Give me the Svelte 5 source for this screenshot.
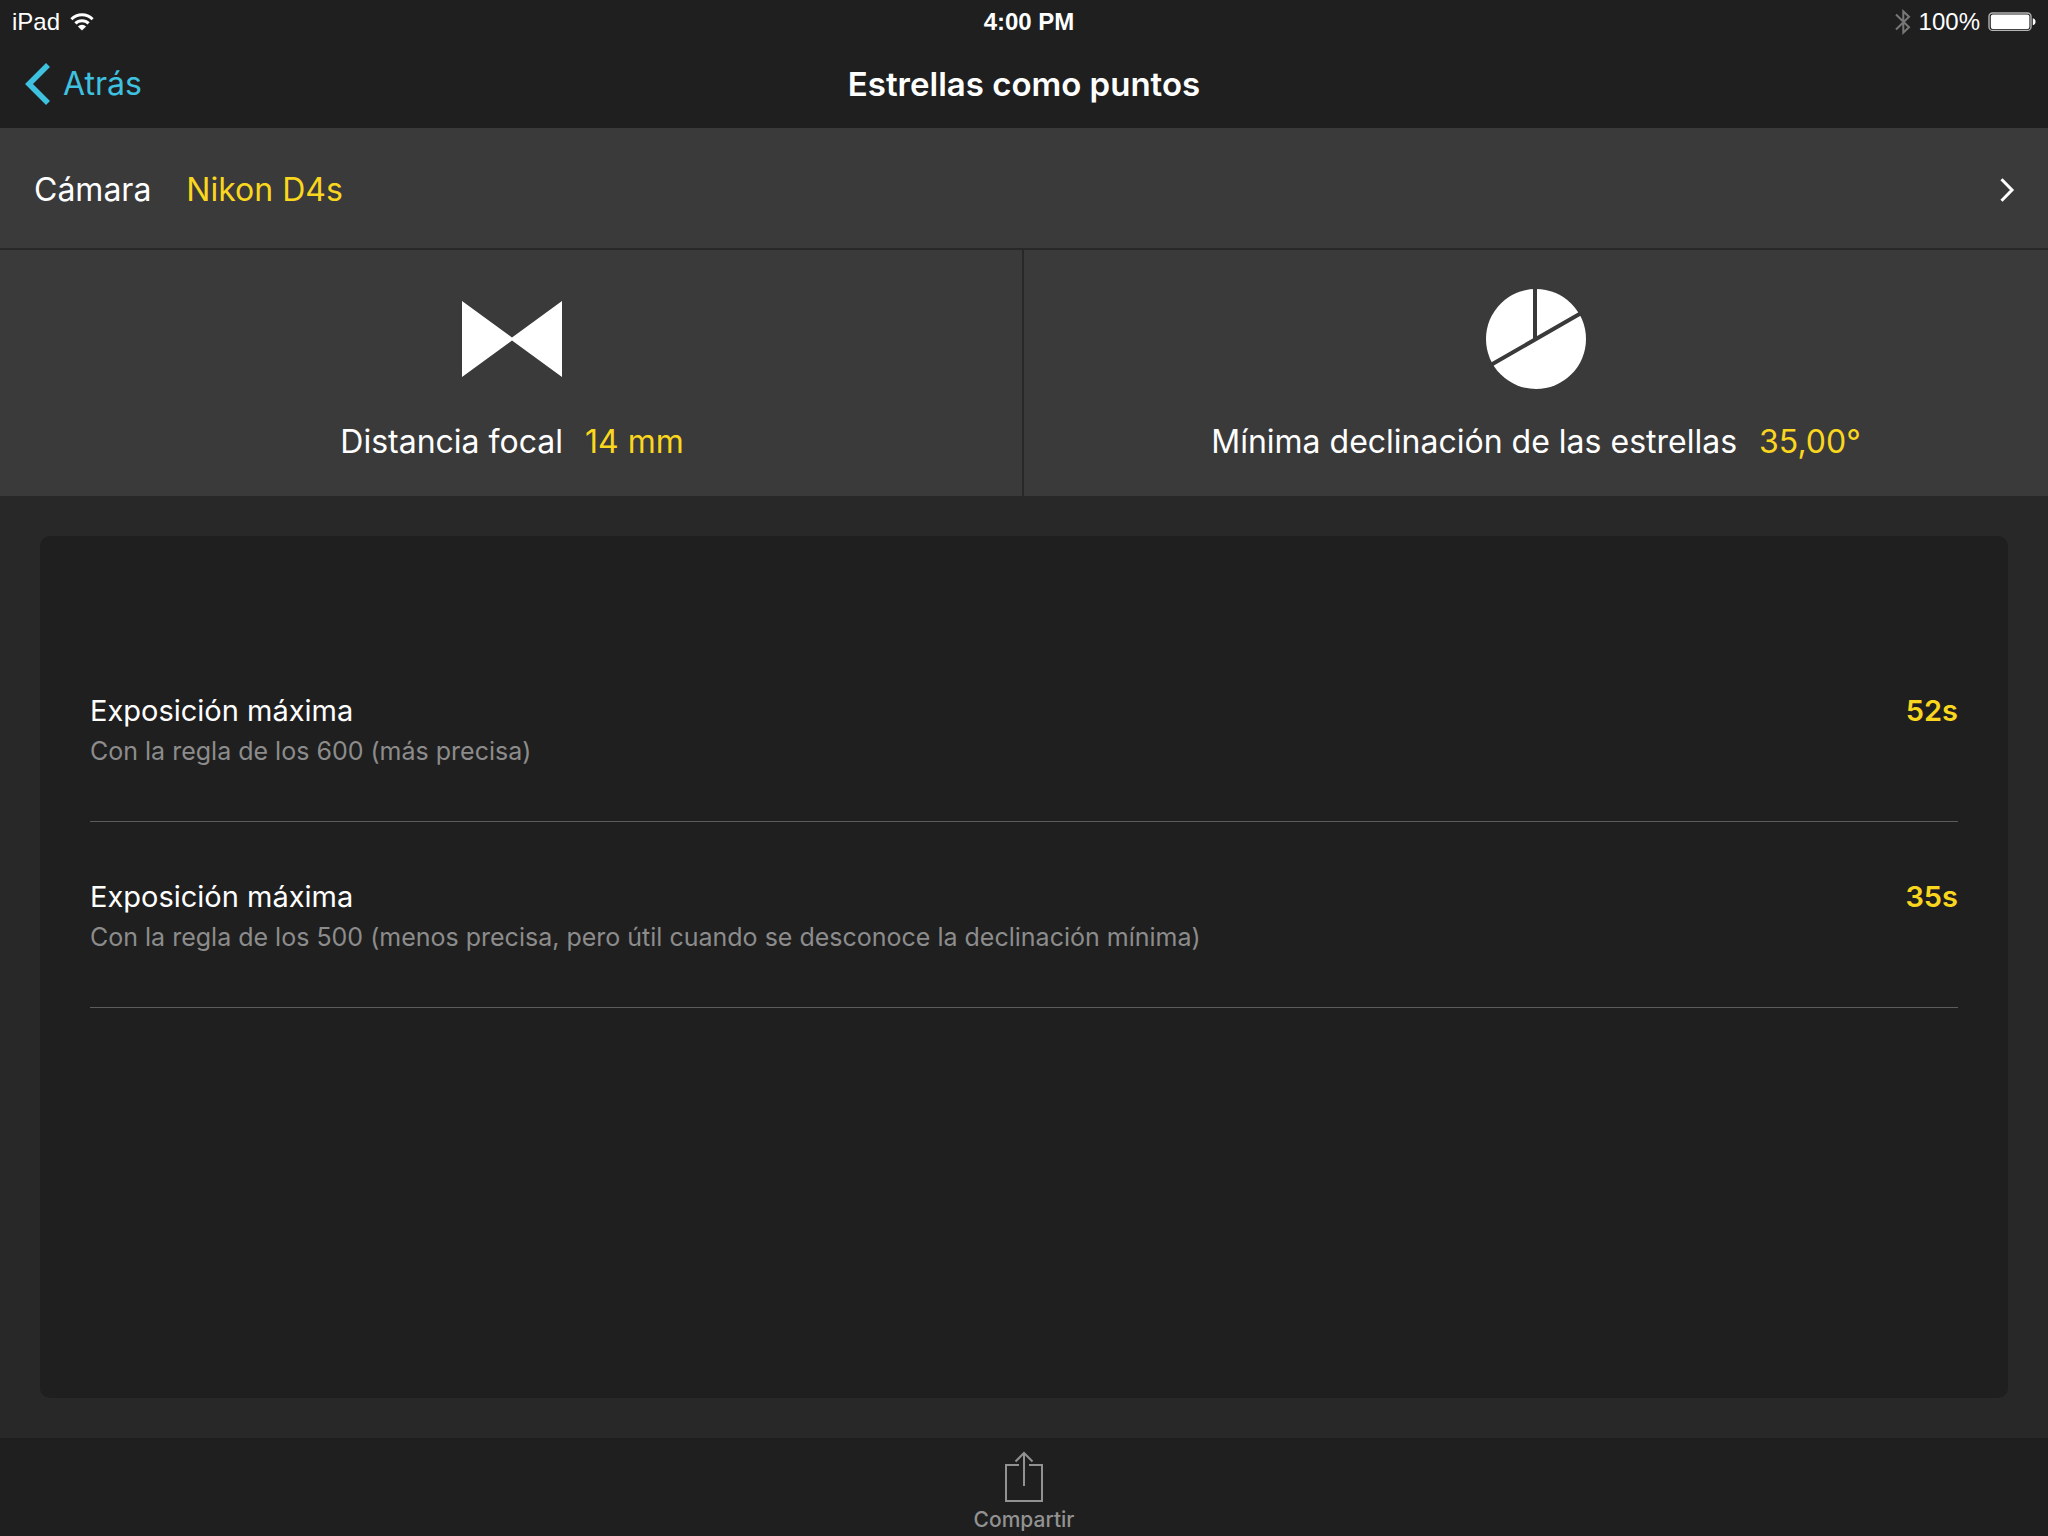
<script>
  const results = [
    { title: 'Exposición máxima', note: 'Con la regla de los 600 (más precisa)', value: '52s' },
    {
      title: 'Exposición máxima',
      note: 'Con la regla de los 500 (menos precisa, pero útil cuando se desconoce la declinación mínima)',
      value: '35s'
    }
  ];
</script>

<div class="screen">
  <div class="status">
    <div class="status-side">
      <span>iPad</span>
      <svg class="wifi" width="24" height="18" viewBox="0 0 24 18" aria-hidden="true">
        <g fill="none" stroke="#fff" stroke-width="3">
          <path d="M1.4 6.2a15 15 0 0 1 21.2 0" />
          <path d="M5.4 10.4a9.3 9.3 0 0 1 13.2 0" />
        </g>
        <path d="M7.9 13.4a5.8 5.8 0 0 1 8.2 0L12 17.6z" fill="#fff" />
      </svg>
    </div>
    <strong class="time">4:00 PM</strong>
    <div class="status-side end">
      <svg width="16" height="26" viewBox="0 0 16 26" fill="none" stroke="#777" stroke-width="2" aria-hidden="true">
        <path d="M1 5.5 14 18.3 8.3 23.6V2.4L14 7.7 1 20.5" />
      </svg>
      <span>100%</span>
      <svg width="48" height="20" viewBox="0 0 48 20" aria-hidden="true">
        <rect x="1" y="1" width="42" height="17.4" rx="3.5" fill="none" stroke="#b4b4b4" stroke-width="1.4" />
        <rect x="2.8" y="2.6" width="38.6" height="14.4" rx="2" fill="#fff" />
        <path d="M44.8 6.2a3.6 3.6 0 0 1 0 7z" fill="#fff" />
      </svg>
    </div>
  </div>

  <header class="nav">
    <button class="back">
      <svg width="27" height="42" viewBox="0 0 27 42" fill="none" stroke="#3fc1e0" stroke-width="5.6" aria-hidden="true">
        <path d="M24 2 5 21l19 19" />
      </svg>
      <span>Atrás</span>
    </button>
    <h1>Estrellas como puntos</h1>
  </header>

  <button class="camera">
    <span>Cámara</span>
    <span class="accent">Nikon D4s</span>
    <svg class="chevron" width="16" height="24" viewBox="0 0 16 24" fill="none" stroke="#fff" stroke-width="3" aria-hidden="true">
      <path d="M1.5 1.2 12 12 1.5 22.8" />
    </svg>
  </button>

  <div class="tiles">
    <button class="tile">
      <svg width="100" height="100" viewBox="0 0 100 100" fill="#fff" aria-hidden="true">
        <path d="M0 12 50 48.5 100 12V88L50 51.5 0 88z" />
      </svg>
      <span class="pair"><span>Distancia focal</span><span class="accent">14 mm</span></span>
    </button>
    <button class="tile">
      <svg width="100" height="100" viewBox="0 0 100 100" aria-hidden="true">
        <circle cx="50" cy="50" r="50" fill="#fff" />
        <path d="M49 -1V50M3 77 97 23" fill="none" stroke="#3a3a3a" stroke-width="4" />
      </svg>
      <span class="pair"><span>Mínima declinación de las estrellas</span><span class="accent">35,00°</span></span>
    </button>
  </div>

  <main>
    <ul class="card">
      {#each results as result}
        <li>
          <div>
            <h2>{result.title}</h2>
            <p>{result.note}</p>
          </div>
          <strong class="value">{result.value}</strong>
        </li>
      {/each}
    </ul>
  </main>

  <footer>
    <button class="share">
      <svg width="40" height="52" viewBox="0 0 40 52" fill="none" stroke="#929292" stroke-width="2" aria-hidden="true">
        <path d="M15 14H2v36h36V14H25M20 35V3M11.5 10.5 20 2l8.5 8.5" />
      </svg>
      <span>Compartir</span>
    </button>
  </footer>
</div>

<style>
  :global(body) {
    margin: 0;
    background: #282828;
  }

  .screen {
    display: flex;
    flex-direction: column;
    min-height: 100vh;
    background: #282828;
    color: #fff;
    font-family: Inter, 'Liberation Sans', sans-serif;
    font-size: 32px;
    line-height: 40px;
  }

  button {
    margin: 0;
    padding: 0;
    border: 0;
    background: none;
    color: inherit;
    font: inherit;
    cursor: pointer;
  }

  svg {
    display: block;
    flex: none;
  }

  h1,
  h2,
  p,
  ul {
    margin: 0;
    padding: 0;
    font-size: inherit;
    font-weight: 400;
  }

  .status {
    display: grid;
    grid-template-columns: 1fr auto 1fr;
    align-items: center;
    height: 40px;
    padding: 3px 2px 0 12px;
    box-sizing: border-box;
    background: #1f1f1f;
    font-family: 'Liberation Sans', Arial, sans-serif;
    font-size: 24px;
    line-height: 28px;
  }

  .status-side {
    display: flex;
    align-items: center;
    gap: 10px;
  }

  .end {
    gap: 8px;
    justify-content: flex-end;
    padding-right: 10px;
  }

  .nav {
    display: grid;
    grid-template-columns: 1fr auto 1fr;
    align-items: center;
    height: 88px;
    padding: 0 24px;
    box-sizing: border-box;
    background: #1f1f1f;
  }

  .back {
    display: flex;
    align-items: center;
    justify-self: start;
    gap: 12px;
    color: #3fc1e0;
  }

  h1 {
    font-size: 33px;
    font-weight: 600;
  }

  .accent {
    color: #fad71e;
  }

  .camera {
    display: flex;
    align-items: center;
    gap: 35px;
    height: 122px;
    padding: 3px 32px 0 34px;
    border-bottom: 2px solid #282828;
    background: #3a3a3a;
  }

  .chevron {
    margin-left: auto;
  }

  .tiles {
    display: grid;
    grid-template-columns: 1fr 1fr;
    background: #3a3a3a;
  }

  .tile {
    display: flex;
    flex-direction: column;
    align-items: center;
    gap: 33px;
    padding: 39px 0 34px;
  }

  .tile:first-child {
    box-shadow: inset -2px 0 #282828;
  }

  .pair {
    display: flex;
    gap: 22px;
  }

  main {
    display: flex;
    flex: 1;
    padding: 40px;
  }

  .card {
    flex: 1;
    padding: 100px 50px;
    border-radius: 10px;
    background: #1f1f1f;
    list-style: none;
  }

  li {
    display: flex;
    justify-content: space-between;
    padding: 54px 0 50px;
    border-bottom: 1px solid #5c5c5c;
  }

  h2,
  .value {
    font-size: 29px;
    line-height: 42px;
  }

  p {
    color: #8c8c8c;
    font-size: 25px;
    line-height: 39px;
  }

  .value {
    color: #fad71e;
    font-weight: 600;
  }

  footer {
    display: flex;
    justify-content: center;
    background: #1f1f1f;
  }

  .share {
    display: flex;
    flex-direction: column;
    align-items: center;
    gap: 5px;
    padding: 13px 0 4px;
    color: #929292;
    font-size: 21px;
    font-weight: 500;
    line-height: 24px;
  }
</style>
